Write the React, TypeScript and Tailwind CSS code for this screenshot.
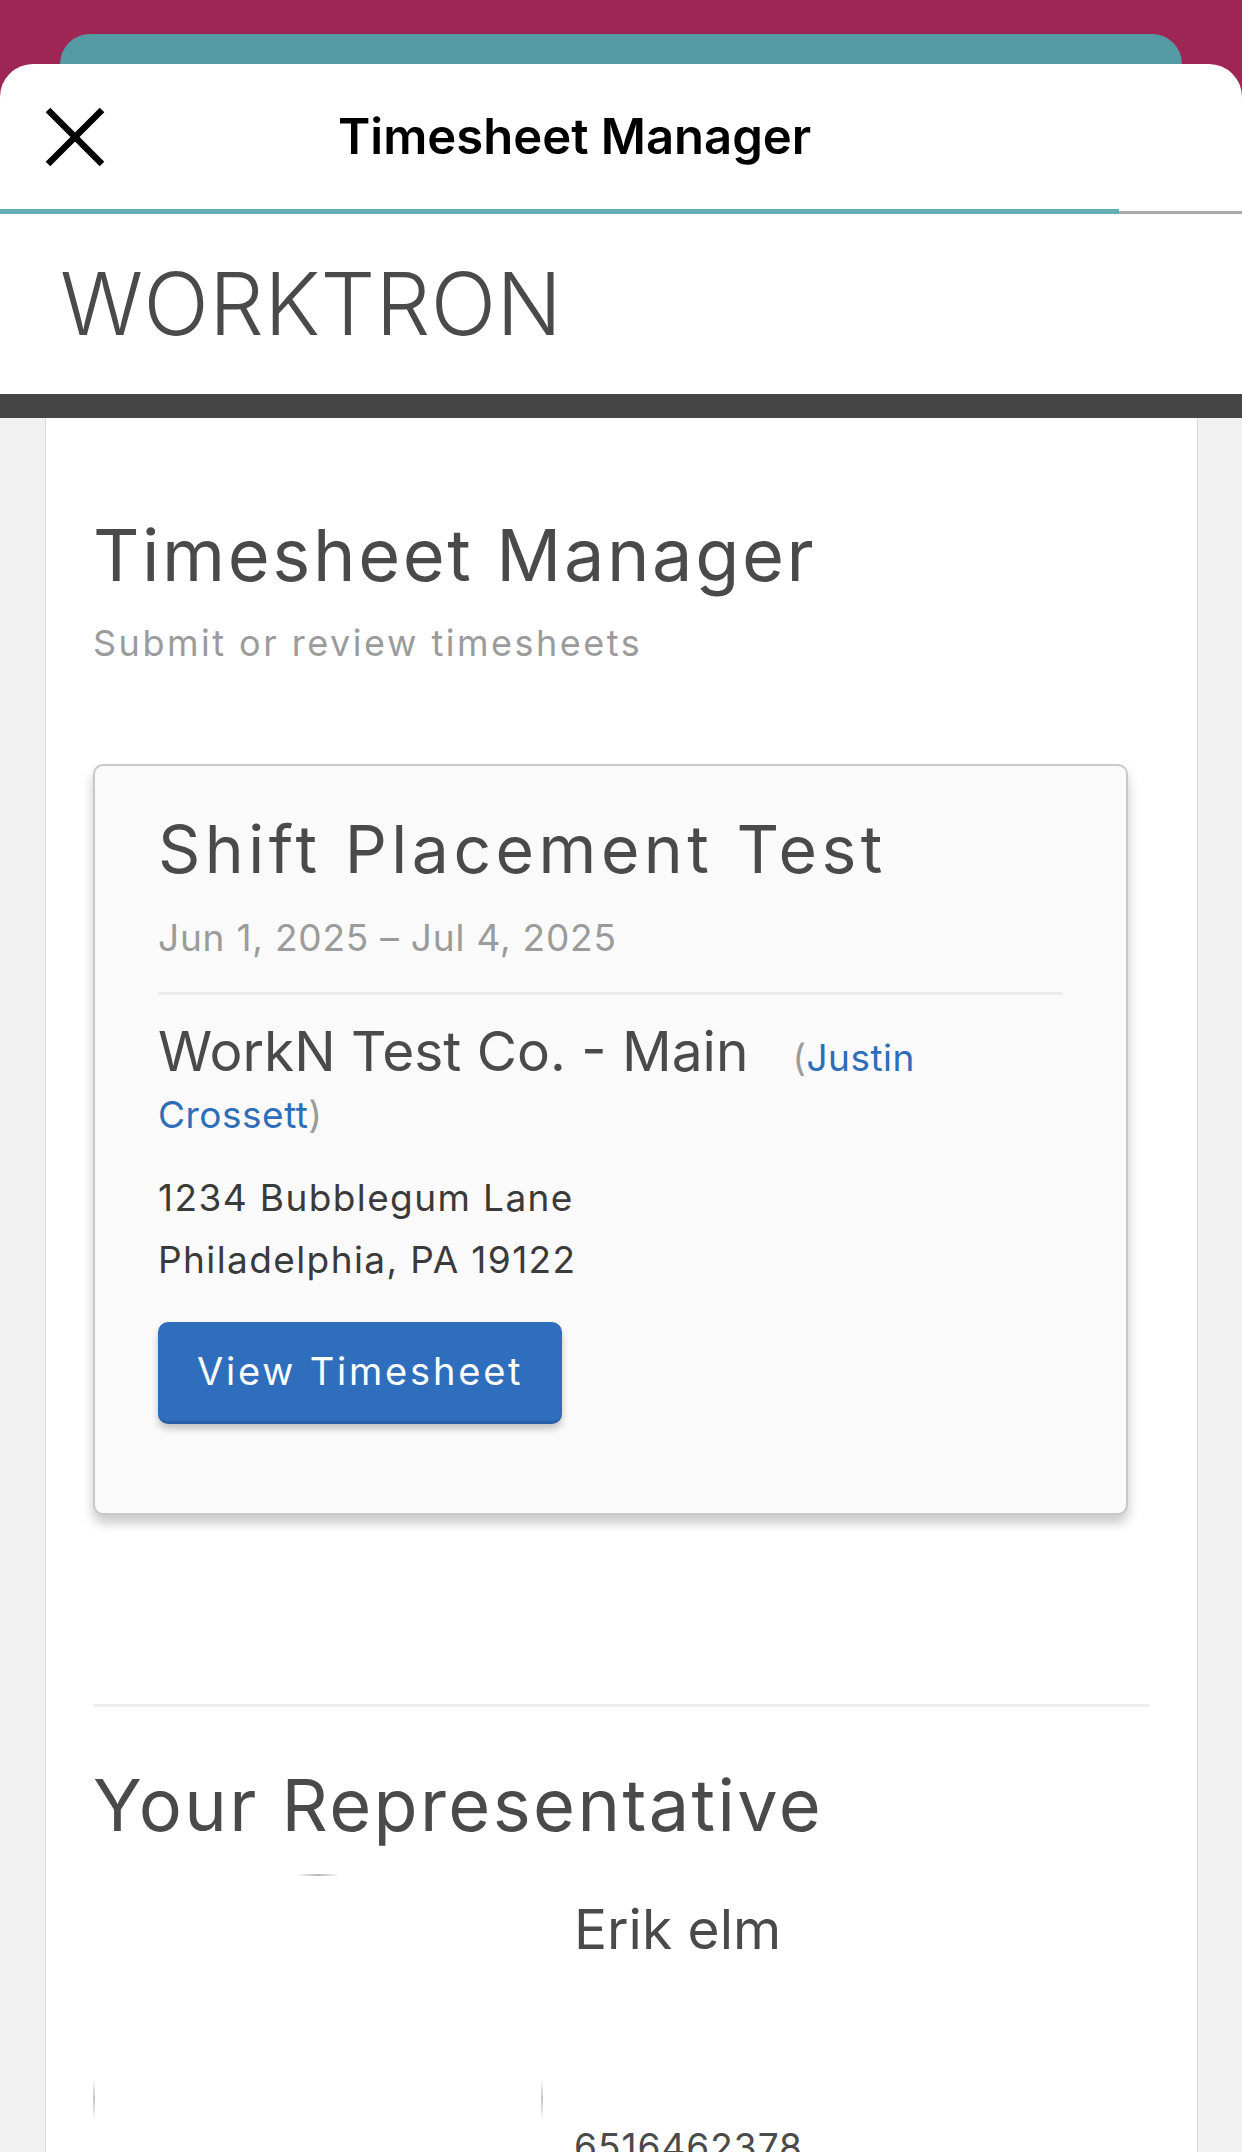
import React from 'react';

function CloseIcon() {
    return (
        <svg width="60" height="60" viewBox="0 0 60 60" fill="none">
            <path d="M3 3 L57 57 M57 3 L3 57" stroke="#000" strokeWidth="6.5" strokeLinecap="butt" />
        </svg>
    );
}

export default function App() {
    return (
        <div className="w-[1242px] h-[2152px] overflow-hidden bg-[#9e2654] font-['Inter',sans-serif]">
            {/* teal sheet peeking behind */}
            <div className="pt-[34px] px-[60px]">
                <div className="h-[30px] rounded-t-[30px] bg-[#559ba4]" />
            </div>

            {/* modal sheet */}
            <div className="rounded-t-[33px] bg-white">
                <div className="h-[145px] flex items-center pl-[45px]">
                    <CloseIcon />
                    <h1 className="ml-[233px] text-[49px] font-semibold text-black">Timesheet Manager</h1>
                </div>

                {/* progress */}
                <div className="flex h-[5px]">
                    <div className="w-[1119px] h-[5px] bg-[#62aeb4]" />
                    <div className="flex-1 h-[3px] self-end bg-[#aaaaaa]" />
                </div>

                {/* site header */}
                <div className="h-[180px] flex items-center pl-[60px]">
                    <span className="text-[86px] leading-none font-light text-[#4a4a4a] tracking-[0.5px]">WORKTRON</span>
                </div>
                <div className="h-[24px] bg-[#454545]" />

                {/* page body */}
                <div className="bg-[#f1f1f1] h-[1800px]">
                    <div className="ml-[45px] w-[1153px] h-full bg-white border-x border-[#dcdcdc] px-[47px]">
                        <h2 className="pt-[101px] text-[72px] leading-none font-normal text-[#4a4a4a] tracking-[2.6px]">Timesheet Manager</h2>
                        <p className="mt-[34px] text-[36px] leading-none text-[#9b9b9b] tracking-[2.5px]">Submit or review timesheets</p>

                        {/* placement card */}
                        <div className="mt-[103px] w-[1035px] rounded-[10px] border-2 border-[#c8c8c8] bg-[#fafafa] px-[63px] pt-[50px] pb-[89px] shadow-[0_8px_12px_rgba(0,0,0,0.22)]">
                            <h3 className="text-[66px] leading-none text-[#4a4a4a] tracking-[4.5px]">Shift Placement Test</h3>
                            <div className="mt-[37px] text-[37px] leading-none text-[#9b9b9b] tracking-[0.8px]">Jun 1, 2025 – Jul 4, 2025</div>
                            <div className="mt-[36px] h-[3px] bg-[#ececec]" />

                            <div className="mt-[31px] text-[55px] leading-[50px] text-[#4a4a4a]">
                                WorkN Test Co. - Main
                                <span className="ml-[44px] text-[37px] text-[#9b9b9b] tracking-[0.5px]">
                                    (<a href="#" className="text-[#2e6db7]">Justin Crossett</a>)
                                </span>
                            </div>

                            <div className="mt-[27px] text-[37px] leading-[62px] text-[#3a3a3a] tracking-[1.4px]">
                                <div>1234 Bubblegum Lane</div>
                                <div>Philadelphia, PA 19122</div>
                            </div>

                            <button className="mt-[31px] h-[102px] px-[39px] rounded-[10px] bg-[#2f6ebd] border-b-[3px] border-[#285fa5] text-white text-[38px] tracking-[2.8px] shadow-[0_5px_7px_rgba(0,0,0,0.22)]">
                                View Timesheet
                            </button>
                        </div>

                        <div className="mt-[189px] h-[3px] bg-[#eeeeee]" />

                        <h2 className="mt-[62px] text-[72px] leading-none font-normal text-[#4a4a4a] tracking-[2.4px]">Your Representative</h2>

                        <div className="flex">
                            <div className="w-[450px] flex flex-col items-center">
                                <div className="mt-[33px] w-[42px] h-[2px] rounded-full bg-gradient-to-r from-transparent via-[#b5b5b5] to-transparent" />
                                <div className="mt-[202px] w-full flex justify-between">
                                    <div className="w-[2px] h-[42px] bg-gradient-to-b from-transparent via-[#c4c4c4] to-transparent" />
                                    <div className="w-[2px] h-[42px] bg-gradient-to-b from-transparent via-[#c4c4c4] to-transparent" />
                                </div>
                            </div>
                            <div className="ml-[31px] flex flex-col">
                                <div className="mt-[61px] text-[55px] leading-none text-[#4a4a4a]">Erik elm</div>
                                <div className="mt-[171px] text-[37px] leading-none text-[#4a4a4a] tracking-[1px]">6516462378</div>
                            </div>
                        </div>
                    </div>
                </div>
            </div>
        </div>
    );
}
